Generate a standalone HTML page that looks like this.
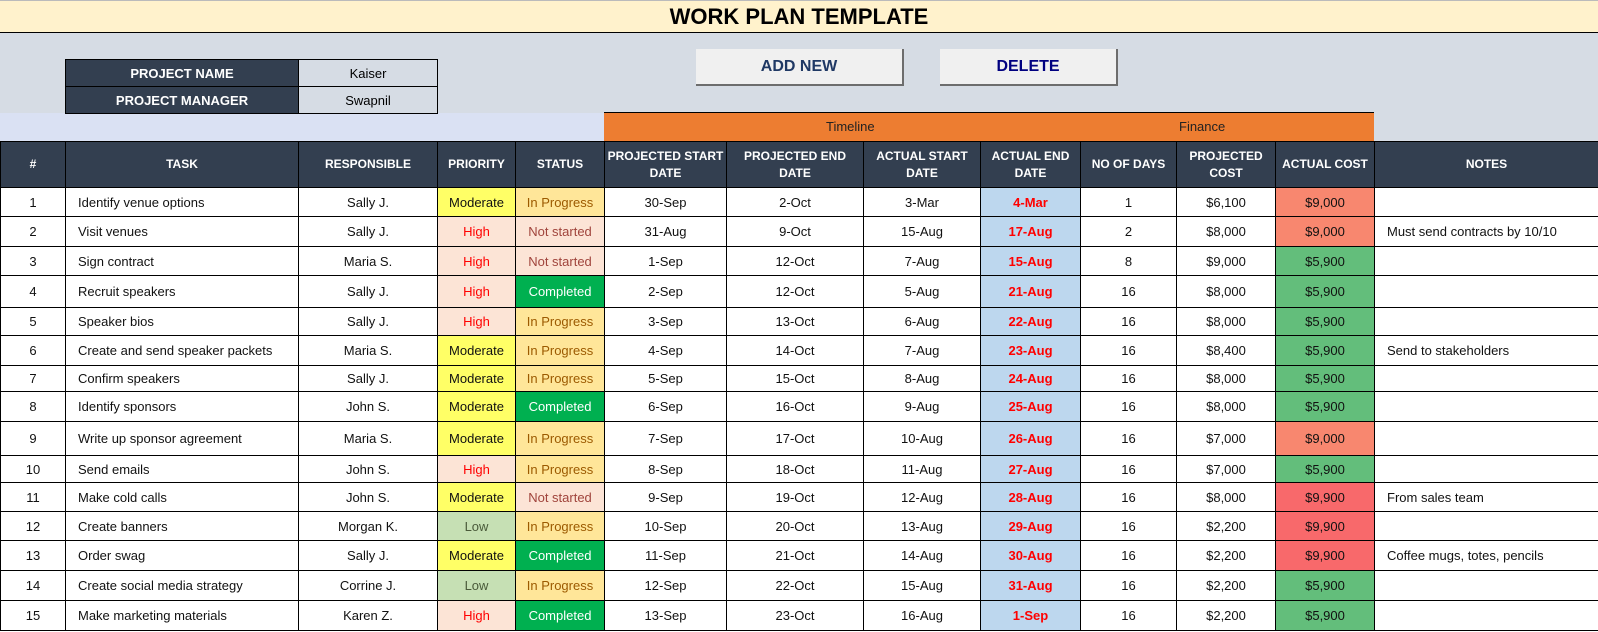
<!DOCTYPE html>
<html><head><meta charset="utf-8"><style>
*{margin:0;padding:0;box-sizing:border-box}
body{width:1598px;height:632px;background:#fff;position:relative;overflow:hidden;font-family:"Liberation Sans",sans-serif}
#title{position:absolute;left:0;top:0;width:1598px;height:33px;background:#fff2cc;border-bottom:1px solid #000;border-top:1px solid #bbb;text-align:center;font-weight:bold;font-size:22px;line-height:32px;color:#000}
#gray{position:absolute;left:0;top:33px;width:1598px;height:108px;background:#d6dce4}
#lav{position:absolute;left:0;top:113px;width:604px;height:28px;background:#dae1f3}
#orange{position:absolute;left:604px;top:112px;width:770px;height:29px;background:#ed7d31;border-top:1px solid #000;font-size:13px;color:#222}
#orange span{position:absolute;top:6px}
.btn{position:absolute;top:49px;height:37px;background:#f0f0f0;border-right:2px solid #6d6d6d;border-bottom:2px solid #6d6d6d;text-align:center;font-weight:bold;font-size:16px;line-height:36px}
#pt{position:absolute;left:65px;top:59px;border-collapse:collapse}
#pt td{border:1px solid #000;height:27px;font-size:13px;text-align:center}
#pt td.l{background:#333f50;color:#fff;font-weight:bold;width:233px}
#pt td.v{background:#d6dce4;width:139px}
#t{position:absolute;left:0;top:141px;width:1598px;border-collapse:collapse;table-layout:fixed}
#t td,#t th{border:1px solid #000;font-size:13px;text-align:center;white-space:nowrap;overflow:hidden;color:#111}
#t th{background:#333f50;color:#fff;font-weight:bold;font-size:12px;line-height:17px;height:46px}
#t td.k{text-align:left;padding-left:12px}
.mod{background:#ffff66}.hi{background:#fce4d6;color:#f00!important}.lo{background:#c6e0b4;color:#4a5a3a!important}
.ip{background:#ffe699;color:#9c5a00!important}.ns{background:#fce4d6;color:#a0443c!important}.co{background:#00b050;color:#fff!important}
.ae{background:#bdd7ee;color:#f00!important;font-weight:bold}
.c9{background:#f8876f}.c5{background:#63be7b}.c99{background:#f8696b}
</style></head><body>
<div id="title">WORK PLAN TEMPLATE</div>
<div id="gray"></div>
<div id="lav"></div>
<div id="orange"><span style="left:222px">Timeline</span><span style="left:575px">Finance</span></div>
<div class="btn" style="left:696px;width:208px;color:#1f3864">ADD NEW</div>
<div class="btn" style="left:940px;width:178px;color:#000080">DELETE</div>
<table id="pt"><tr><td class="l">PROJECT NAME</td><td class="v">Kaiser</td></tr><tr><td class="l">PROJECT MANAGER</td><td class="v">Swapnil</td></tr></table>
<table id="t">
<colgroup><col style="width:65px"><col style="width:233px"><col style="width:139px"><col style="width:78px"><col style="width:89px"><col style="width:122px"><col style="width:137px"><col style="width:117px"><col style="width:100px"><col style="width:96px"><col style="width:99px"><col style="width:99px"><col style="width:224px"></colgroup>
<tr><th>#</th><th>TASK</th><th>RESPONSIBLE</th><th>PRIORITY</th><th>STATUS</th><th>PROJECTED START<br>DATE</th><th>PROJECTED END<br>DATE</th><th>ACTUAL START<br>DATE</th><th>ACTUAL END<br>DATE</th><th>NO OF DAYS</th><th>PROJECTED<br>COST</th><th>ACTUAL COST</th><th>NOTES</th></tr>
<tr style="height:29px"><td>1</td><td class="k">Identify venue options</td><td>Sally J.</td><td class="mod">Moderate</td><td class="ip">In Progress</td><td>30-Sep</td><td>2-Oct</td><td>3-Mar</td><td class="ae">4-Mar</td><td>1</td><td>$6,100</td><td class="c9">$9,000</td><td class="k"></td></tr>
<tr style="height:30px"><td>2</td><td class="k">Visit venues</td><td>Sally J.</td><td class="hi">High</td><td class="ns">Not started</td><td>31-Aug</td><td>9-Oct</td><td>15-Aug</td><td class="ae">17-Aug</td><td>2</td><td>$8,000</td><td class="c9">$9,000</td><td class="k">Must send contracts by 10/10</td></tr>
<tr style="height:29px"><td>3</td><td class="k">Sign contract</td><td>Maria S.</td><td class="hi">High</td><td class="ns">Not started</td><td>1-Sep</td><td>12-Oct</td><td>7-Aug</td><td class="ae">15-Aug</td><td>8</td><td>$9,000</td><td class="c5">$5,900</td><td class="k"></td></tr>
<tr style="height:32px"><td>4</td><td class="k">Recruit speakers</td><td>Sally J.</td><td class="hi">High</td><td class="co">Completed</td><td>2-Sep</td><td>12-Oct</td><td>5-Aug</td><td class="ae">21-Aug</td><td>16</td><td>$8,000</td><td class="c5">$5,900</td><td class="k"></td></tr>
<tr style="height:28px"><td>5</td><td class="k">Speaker bios</td><td>Sally J.</td><td class="hi">High</td><td class="ip">In Progress</td><td>3-Sep</td><td>13-Oct</td><td>6-Aug</td><td class="ae">22-Aug</td><td>16</td><td>$8,000</td><td class="c5">$5,900</td><td class="k"></td></tr>
<tr style="height:30px"><td>6</td><td class="k">Create and send speaker packets</td><td>Maria S.</td><td class="mod">Moderate</td><td class="ip">In Progress</td><td>4-Sep</td><td>14-Oct</td><td>7-Aug</td><td class="ae">23-Aug</td><td>16</td><td>$8,400</td><td class="c5">$5,900</td><td class="k">Send to stakeholders</td></tr>
<tr style="height:26px"><td>7</td><td class="k">Confirm speakers</td><td>Sally J.</td><td class="mod">Moderate</td><td class="ip">In Progress</td><td>5-Sep</td><td>15-Oct</td><td>8-Aug</td><td class="ae">24-Aug</td><td>16</td><td>$8,000</td><td class="c5">$5,900</td><td class="k"></td></tr>
<tr style="height:30px"><td>8</td><td class="k">Identify sponsors</td><td>John S.</td><td class="mod">Moderate</td><td class="co">Completed</td><td>6-Sep</td><td>16-Oct</td><td>9-Aug</td><td class="ae">25-Aug</td><td>16</td><td>$8,000</td><td class="c5">$5,900</td><td class="k"></td></tr>
<tr style="height:34px"><td>9</td><td class="k">Write up sponsor agreement</td><td>Maria S.</td><td class="mod">Moderate</td><td class="ip">In Progress</td><td>7-Sep</td><td>17-Oct</td><td>10-Aug</td><td class="ae">26-Aug</td><td>16</td><td>$7,000</td><td class="c9">$9,000</td><td class="k"></td></tr>
<tr style="height:27px"><td>10</td><td class="k">Send emails</td><td>John S.</td><td class="hi">High</td><td class="ip">In Progress</td><td>8-Sep</td><td>18-Oct</td><td>11-Aug</td><td class="ae">27-Aug</td><td>16</td><td>$7,000</td><td class="c5">$5,900</td><td class="k"></td></tr>
<tr style="height:29px"><td>11</td><td class="k">Make cold calls</td><td>John S.</td><td class="mod">Moderate</td><td class="ns">Not started</td><td>9-Sep</td><td>19-Oct</td><td>12-Aug</td><td class="ae">28-Aug</td><td>16</td><td>$8,000</td><td class="c99">$9,900</td><td class="k">From sales team</td></tr>
<tr style="height:29px"><td>12</td><td class="k">Create banners</td><td>Morgan K.</td><td class="lo">Low</td><td class="ip">In Progress</td><td>10-Sep</td><td>20-Oct</td><td>13-Aug</td><td class="ae">29-Aug</td><td>16</td><td>$2,200</td><td class="c99">$9,900</td><td class="k"></td></tr>
<tr style="height:30px"><td>13</td><td class="k">Order swag</td><td>Sally J.</td><td class="mod">Moderate</td><td class="co">Completed</td><td>11-Sep</td><td>21-Oct</td><td>14-Aug</td><td class="ae">30-Aug</td><td>16</td><td>$2,200</td><td class="c99">$9,900</td><td class="k">Coffee mugs, totes, pencils</td></tr>
<tr style="height:30px"><td>14</td><td class="k">Create social media strategy</td><td>Corrine J.</td><td class="lo">Low</td><td class="ip">In Progress</td><td>12-Sep</td><td>22-Oct</td><td>15-Aug</td><td class="ae">31-Aug</td><td>16</td><td>$2,200</td><td class="c5">$5,900</td><td class="k"></td></tr>
<tr style="height:30px"><td>15</td><td class="k">Make marketing materials</td><td>Karen Z.</td><td class="hi">High</td><td class="co">Completed</td><td>13-Sep</td><td>23-Oct</td><td>16-Aug</td><td class="ae">1-Sep</td><td>16</td><td>$2,200</td><td class="c5">$5,900</td><td class="k"></td></tr>
</table>
</body></html>
